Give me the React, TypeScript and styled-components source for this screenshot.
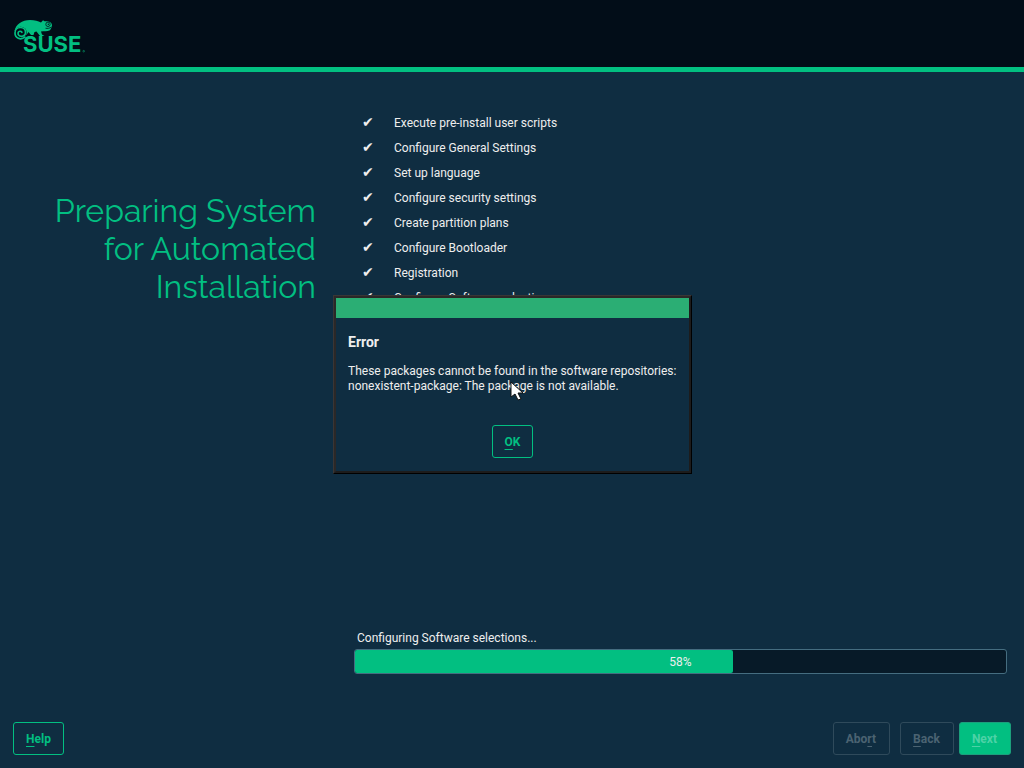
import React from "react";
import styled, { createGlobalStyle, css } from "styled-components";

const GlobalStyle = createGlobalStyle`
  *, *::before, *::after { box-sizing: border-box; }
  body {
    margin: 0;
    background: #0f2d41;
    color: #eeeeee;
    font: 12px/15px Roboto, "Liberation Sans", sans-serif;
  }
`;

const Page = styled.div`
  display: flex;
  flex-direction: column;
  min-height: 100vh;
`;

const Header = styled.header`
  display: flex;
  align-items: center;
  padding: 16px 12px 11px;
  background: #020d18;
  border-bottom: 5px solid #02bf81;
`;

const Logo = styled.svg`
  display: block;
  width: 80px;
  height: 40px;
  color: #02bf81;
  overflow: visible;
`;

const Main = styled.main`
  flex: 1;
  display: grid;
  grid-template-columns: 316px minmax(0, 1fr);
  column-gap: 38px;
  padding: 39px 17px 48px 0;
`;

const Title = styled.h1`
  margin: 81px 0 0;
  padding-left: 40px;
  color: #02bf81;
  font: 400 32px/38px Raleway, Lato, sans-serif;
  text-align: right;
`;

const Work = styled.section`
  display: flex;
  flex-direction: column;
  justify-content: space-between;
`;

const Steps = styled.ul`
  margin: 0;
  padding: 0 0 0 8px;
  list-style: none;
`;

const Step = styled.li`
  display: flex;
  align-items: center;
  height: 25px;
`;

const Mark = styled.span`
  width: 32px;
  padding-bottom: 2px;
  font-family: "DejaVu Sans", sans-serif;
  font-size: 14px;
`;

const Progress = styled.div`
  display: flex;
  flex-direction: column;
  gap: 3px;
`;

const ProgressLabel = styled.span`
  padding-left: 3px;
`;

const Track = styled.div`
  position: relative;
  height: 25px;
  border: 1px solid #456d80;
  border-radius: 3px;
  background: #071a28;
`;

const Fill = styled.div`
  height: 100%;
  border-radius: 2px;
  background: #02bf81;
`;

const Percent = styled.span`
  position: absolute;
  inset: 0;
  line-height: 25px;
  text-align: center;
`;

const Footer = styled.footer`
  display: flex;
  align-items: center;
  padding: 0 13px 13px;
`;

const Spacer = styled.div`
  flex: 1;
`;

type Variant = "normal" | "primary";

const Button = styled.button<{ $variant?: Variant; $gap?: number }>`
  height: 33px;
  margin-left: ${({ $gap = 0 }) => $gap}px;
  padding: 2px 12px 0;
  border: 1px solid #02bf81;
  border-radius: 3px;
  background: transparent;
  color: #02bf81;
  font: 700 12px/15px Roboto, "Liberation Sans", sans-serif;

  &:disabled {
    padding-right: 13px;
    border-color: #2f4a5b;
    color: #4b6372;
  }

  ${({ $variant }) =>
    $variant === "primary" &&
    css`
      &:disabled {
        border-color: #1c9f7c;
        background: #02bf81;
        color: #4dd2a7;
      }
    `}
`;

const Mnemonic = styled.span`
  text-decoration: underline;
  text-decoration-thickness: 1px;
  text-underline-offset: 3px;
`;

const Overlay = styled.div`
  position: fixed;
  inset: 0;
  display: grid;
  place-items: center;
  padding: 1px 0 0 1px;
`;

const Dialog = styled.div`
  width: 359px;
  border: 1px solid #393636;
  border-right-color: #000000;
  border-bottom-color: #000000;
  background: #0f2d41;
`;

const DialogFrame = styled.div`
  border: 2px solid #2a2828;
  border-right-color: #1d1c1c;
  border-bottom-color: #1d1c1c;
`;

const TitleBar = styled.div`
  height: 20px;
  background: #2bae74;
`;

const DialogBody = styled.div`
  display: flex;
  flex-direction: column;
  padding: 15px 12px 13px;
`;

const DialogTitle = styled.h2`
  margin: 0 0 12px;
  font-size: 14px;
  line-height: 19px;
`;

const Message = styled.p`
  margin: 0 0 31px;
  white-space: nowrap;
`;

const DialogActions = styled.div`
  display: flex;
  justify-content: center;
`;

const Pointer = styled.svg`
  position: fixed;
  top: calc(50% - 3px);
  left: calc(50% - 2px);
  width: 14px;
  height: 22px;
  pointer-events: none;
`;

const steps = [
  "Execute pre-install user scripts",
  "Configure General Settings",
  "Set up language",
  "Configure security settings",
  "Create partition plans",
  "Configure Bootloader",
  "Registration",
  "Configure Software selections",
];

function SuseLogo() {
  return (
    <Logo viewBox="0 -2 80 40" role="img" aria-label="SUSE">
      <path
        fill="currentColor"
        d="M2.500 13C4 6 10 2 18 2c5 0 8 1 11 2.500l2-2.300 1.500 1c4-.4 7.500 1 7.500 4-.2 2-1 3.500-2 5-3 1.300-6 .8-9 1.300l1 3 2.500 1.500h-4.500l-3.500-4.500-2 .5-1 3h-2.500l-2.500-3-2 3H13.500c1.500-5-4-8.500-11-4z"
      />
      <circle cx="8.700" cy="14.800" r="6" fill="#020d18" />
      <path
        fill="none"
        stroke="currentColor"
        strokeWidth="1.700"
        strokeLinecap="round"
        d="M13 19.200c-4.500 3.500-10 .8-10-4.200 0-3.500 2.500-5.500 5.500-5.500s5 2.200 5 4.800-2 4-4.200 4-3.500-1.600-3.200-3.400 2.800-2.300 3.800-.6"
      />
      <path
        fill="none"
        stroke="#020d18"
        strokeWidth=".8"
        d="M39.500 9c-2 1.400-4 1.600-6 1.200"
      />
      <circle cx="36" cy="6.300" r="2.200" fill="none" stroke="#020d18" strokeWidth=".8" />
      <circle cx="36.300" cy="6.300" r=".7" fill="#020d18" />
      <text x="11" y="34" fill="currentColor" fontFamily="Inter, sans-serif" fontSize="22" fontWeight="700">
        SUSE
      </text>
      <circle cx="71.700" cy="33.200" r=".8" fill="none" stroke="currentColor" strokeWidth=".5" />
    </Logo>
  );
}

export default function App() {
  const percent = 58;
  return (
    <Page>
      <GlobalStyle />
      <Header>
        <SuseLogo />
      </Header>
      <Main>
        <Title>Preparing System for Automated Installation</Title>
        <Work>
          <Steps>
            {steps.map((step) => (
              <Step key={step}>
                <Mark aria-hidden="true">✔</Mark>
                {step}
              </Step>
            ))}
          </Steps>
          <Progress>
            <ProgressLabel id="progress-label">Configuring Software selections...</ProgressLabel>
            <Track role="progressbar" aria-labelledby="progress-label" aria-valuenow={percent}>
              <Fill style={{ width: `${percent}%` }} />
              <Percent>{percent}%</Percent>
            </Track>
          </Progress>
        </Work>
      </Main>
      <Footer>
        <Button type="button"><Mnemonic>H</Mnemonic>elp</Button>
        <Spacer />
        <Button type="button" disabled>Abo<Mnemonic>r</Mnemonic>t</Button>
        <Button type="button" disabled $gap={10}><Mnemonic>B</Mnemonic>ack</Button>
        <Button type="button" disabled $variant="primary" $gap={5}><Mnemonic>N</Mnemonic>ext</Button>
      </Footer>
      <Overlay>
        <Dialog role="alertdialog" aria-labelledby="error-title" aria-describedby="error-message">
          <DialogFrame>
            <TitleBar />
            <DialogBody>
              <DialogTitle id="error-title">Error</DialogTitle>
              <Message id="error-message">
                These packages cannot be found in the software repositories:
                <br />
                nonexistent-package: The package is not available.
              </Message>
              <DialogActions>
                <Button type="button"><Mnemonic>O</Mnemonic>K</Button>
              </DialogActions>
            </DialogBody>
          </DialogFrame>
        </Dialog>
      </Overlay>
      <Pointer viewBox="0 0 14 22" aria-hidden="true">
        <path d="M1 1v15l4-3 3 6 3-1-3-6h5z" fill="#fff" stroke="#111" strokeWidth="1" />
      </Pointer>
    </Page>
  );
}
